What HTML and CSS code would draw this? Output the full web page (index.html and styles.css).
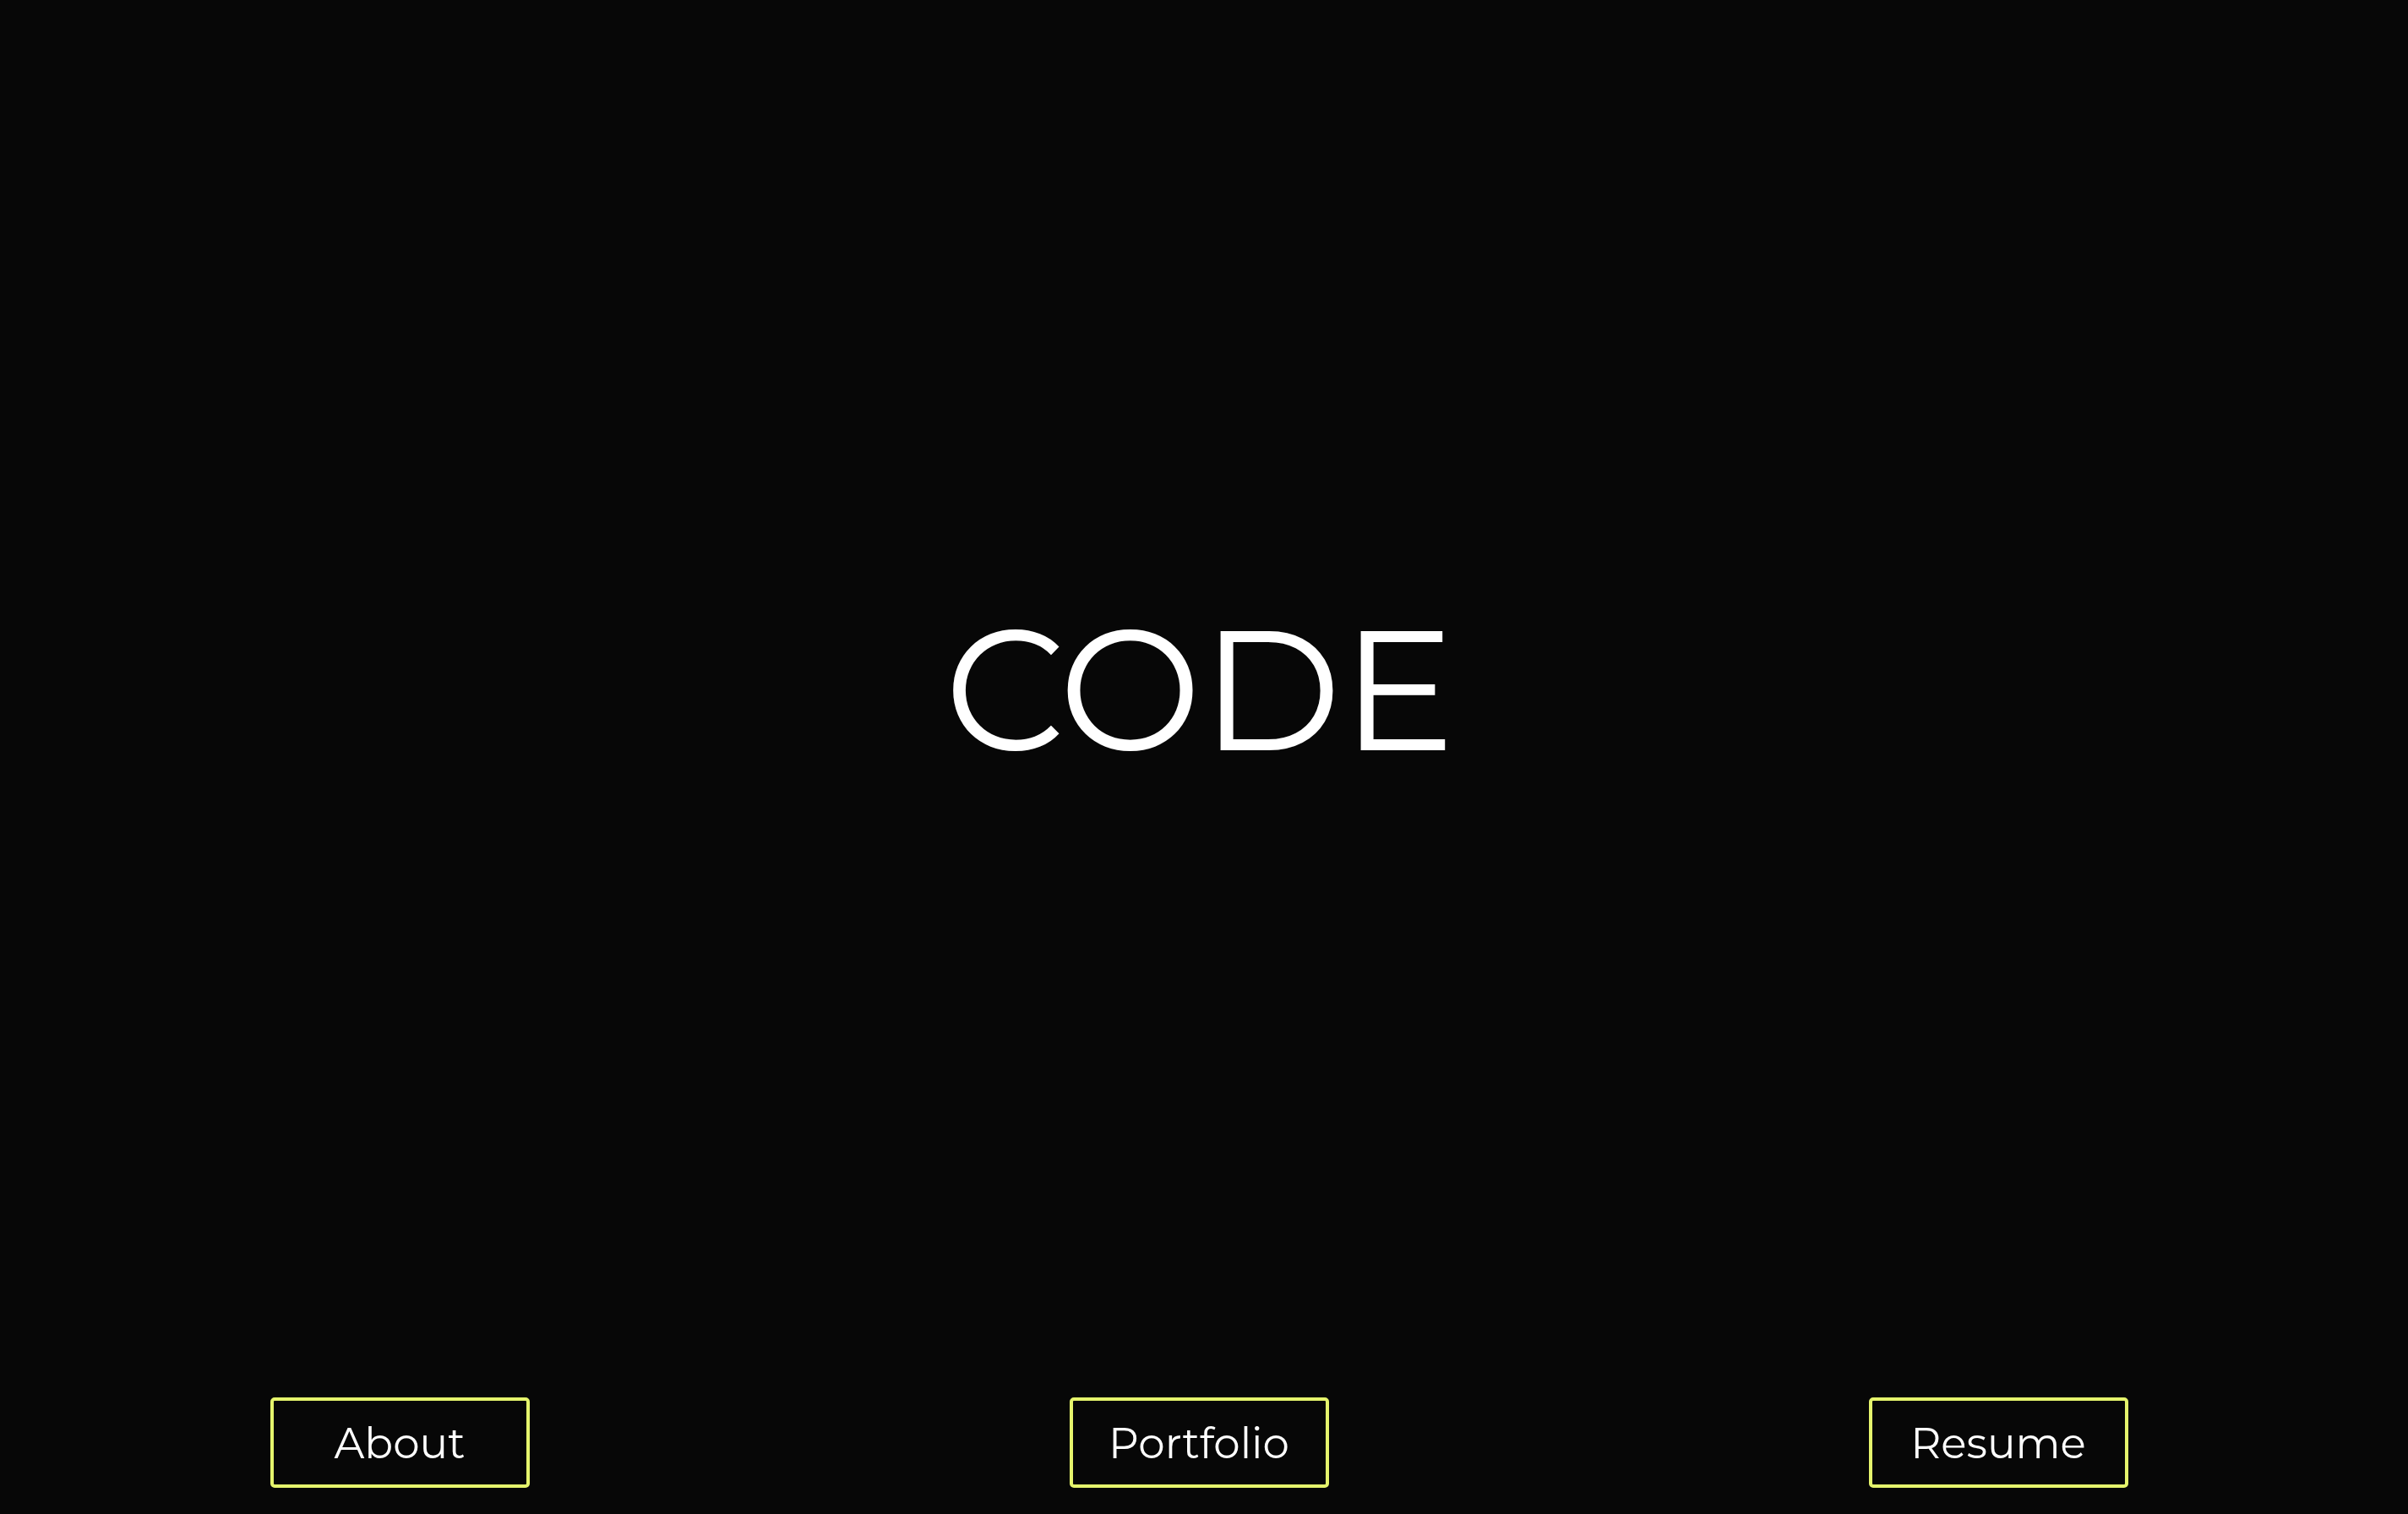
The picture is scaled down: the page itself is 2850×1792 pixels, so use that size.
FILE: index.html
```html
<!DOCTYPE html>
<html lang="en">
<head>
<meta charset="utf-8">
<title>CODE</title>
<link rel="stylesheet" href="styles.css">
</head>
<body>
<main class="page">
  <section class="hero">
    <h1 class="hero-title">CODE</h1>
  </section>
  <nav class="nav">
    <a class="nav-btn" href="#about">About</a>
    <a class="nav-btn" href="#portfolio">Portfolio</a>
    <a class="nav-btn" href="#resume">Resume</a>
  </nav>
</main>
</body>
</html>
```
FILE: styles.css
```css
html, body {
  margin: 0;
  padding: 0;
  background: #070707;
}

body {
  font-family: "Montserrat", "DejaVu Sans", "Noto Sans", sans-serif;
  color: #ffffff;
  height: 1792px;
  overflow: hidden;
}

.page {
  display: flex;
  flex-direction: column;
}

.hero {
  height: 1630px;
  display: flex;
  align-items: center;
  justify-content: center;
}

.hero-title {
  margin: 0;
  font-size: 201px;
  font-weight: 400;
  line-height: 1;
  letter-spacing: 0;
  color: #ffffff;
  transform: translateX(-5px);
}

.nav {
  width: 2838px;
  padding-top: 24px;
  display: grid;
  grid-template-columns: repeat(3, 1fr);
  justify-items: center;
}

.nav-btn {
  box-sizing: border-box;
  width: 307px;
  height: 107px;
  padding-top: 3px;
  border: 4px solid #e5f46c;
  border-radius: 5px;
  display: flex;
  align-items: center;
  justify-content: center;
  font-size: 50px;
  line-height: 1;
  color: #ffffff;
  text-decoration: none;
}
```
